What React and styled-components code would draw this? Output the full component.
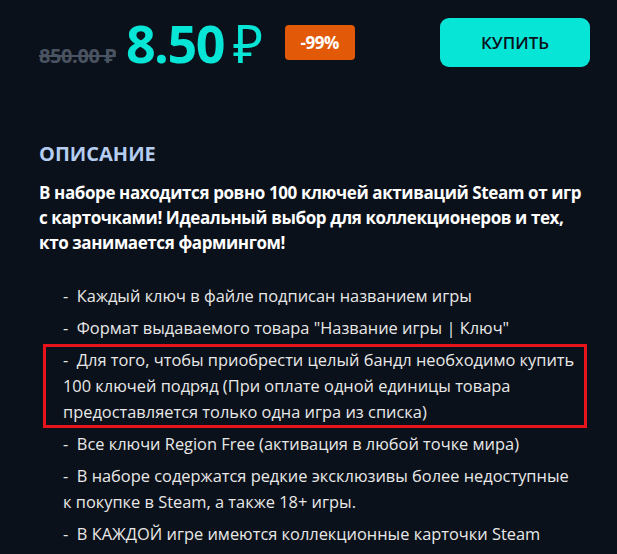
import React from "react";
import styled, { createGlobalStyle } from "styled-components";

const items = [
  { text: "Каждый ключ в файле подписан названием игры" },
  { text: "Формат выдаваемого товара \"Название игры | Ключ\"" },
  {
    text: "Для того, чтобы приобрести целый бандл необходимо купить 100 ключей подряд (При оплате одной единицы товара предоставляется только одна игра из списка)",
    marked: true,
  },
  { text: "Все ключи Region Free (активация в любой точке мира)" },
  { text: "В наборе содержатся редкие эксклюзивы более недоступные к покупке в Steam, а также 18+ игры." },
  { text: "В КАЖДОЙ игре имеются коллекционные карточки Steam" },
];

const App = () => {
  return (
    <>
      <GlobalStyle />
      <Page>
        <PriceRow>
          <PriceGroup>
            <Prices>
              <OldPrice>850.00 ₽</OldPrice>
              <NewPrice>
                8.50<Currency>₽</Currency>
              </NewPrice>
            </Prices>
            <Badge>-99%</Badge>
          </PriceGroup>
          <BuyButton type="button">КУПИТЬ</BuyButton>
        </PriceRow>

        <Title>ОПИСАНИЕ</Title>
        <Lead>
          В наборе находится ровно 100 ключей активаций Steam от игр с карточками! Идеальный выбор для
          коллекционеров и тех, кто занимается фармингом!
        </Lead>

        <List>
          {items.map((item, i) => (
            <Item key={i} $marked={item.marked}>
              -&nbsp;&nbsp;{item.text}
            </Item>
          ))}
        </List>
      </Page>
    </>
  );
};

export default App;

const GlobalStyle = createGlobalStyle`
  html, body {
    margin: 0;
    background: #0b111a;
  }
  body {
    font-family: "Open Sans", "Noto Sans", sans-serif;
    overflow: hidden;
  }
`;
const Page = styled.div`
  width: 617px;
  height: 554px;
  box-sizing: border-box;
  padding: 18px 27px 0 39px;
  background: #0b111a;
`;
const PriceRow = styled.div`
  display: flex;
  align-items: center;
  justify-content: space-between;
  height: 49px;
`;
const PriceGroup = styled.div`
  display: flex;
  align-items: center;
  gap: 23px;
`;
const Prices = styled.div`
  display: flex;
  align-items: baseline;
  gap: 10px;
`;
const OldPrice = styled.span`
  font-size: 20px;
  font-weight: 700;
  color: #4a5361;
  text-decoration: line-through;
  letter-spacing: -0.4px;
`;
const NewPrice = styled.span`
  font-size: 52px;
  font-weight: 700;
  line-height: 1;
  color: #07e6d6;
  letter-spacing: -1.5px;
`;
const Currency = styled.span`
  font-weight: 400;
  margin-left: 9px;
`;
const Badge = styled.span`
  display: flex;
  align-items: center;
  justify-content: center;
  width: 70px;
  height: 35px;
  border-radius: 4px;
  background: #e25a08;
  color: #ffffff;
  font-size: 17px;
  font-weight: 700;
  letter-spacing: -0.5px;
`;
const BuyButton = styled.button`
  width: 150px;
  height: 49px;
  border: none;
  border-radius: 9px;
  background: #07e6d6;
  color: #0b111a;
  font-family: inherit;
  font-size: 17px;
  font-weight: 600;
  cursor: pointer;
`;
const Title = styled.h2`
  margin: 75px 0 0;
  font-size: 20px;
  line-height: 24px;
  font-weight: 700;
  color: #b4cdf0;
`;
const Lead = styled.p`
  margin: 14px 0 0;
  font-size: 17px;
  line-height: 25px;
  font-weight: 700;
  letter-spacing: -0.4px;
  color: #ffffff;
`;
const List = styled.ul`
  list-style: none;
  margin: 28px 0 0;
  padding: 0 0 0 24px;
  width: 517px;
`;
const Item = styled.li`
  position: relative;
  margin-bottom: 6px;
  font-size: 16.4px;
  line-height: 26px;
  color: #e8e8e8;

  &::after {
    content: "";
    display: ${(p) => (p.$marked ? "block" : "none")};
    position: absolute;
    top: -3px;
    bottom: -3px;
    left: -20px;
    right: -7px;
    border: 3px solid #e8131b;
    pointer-events: none;
  }
`;
